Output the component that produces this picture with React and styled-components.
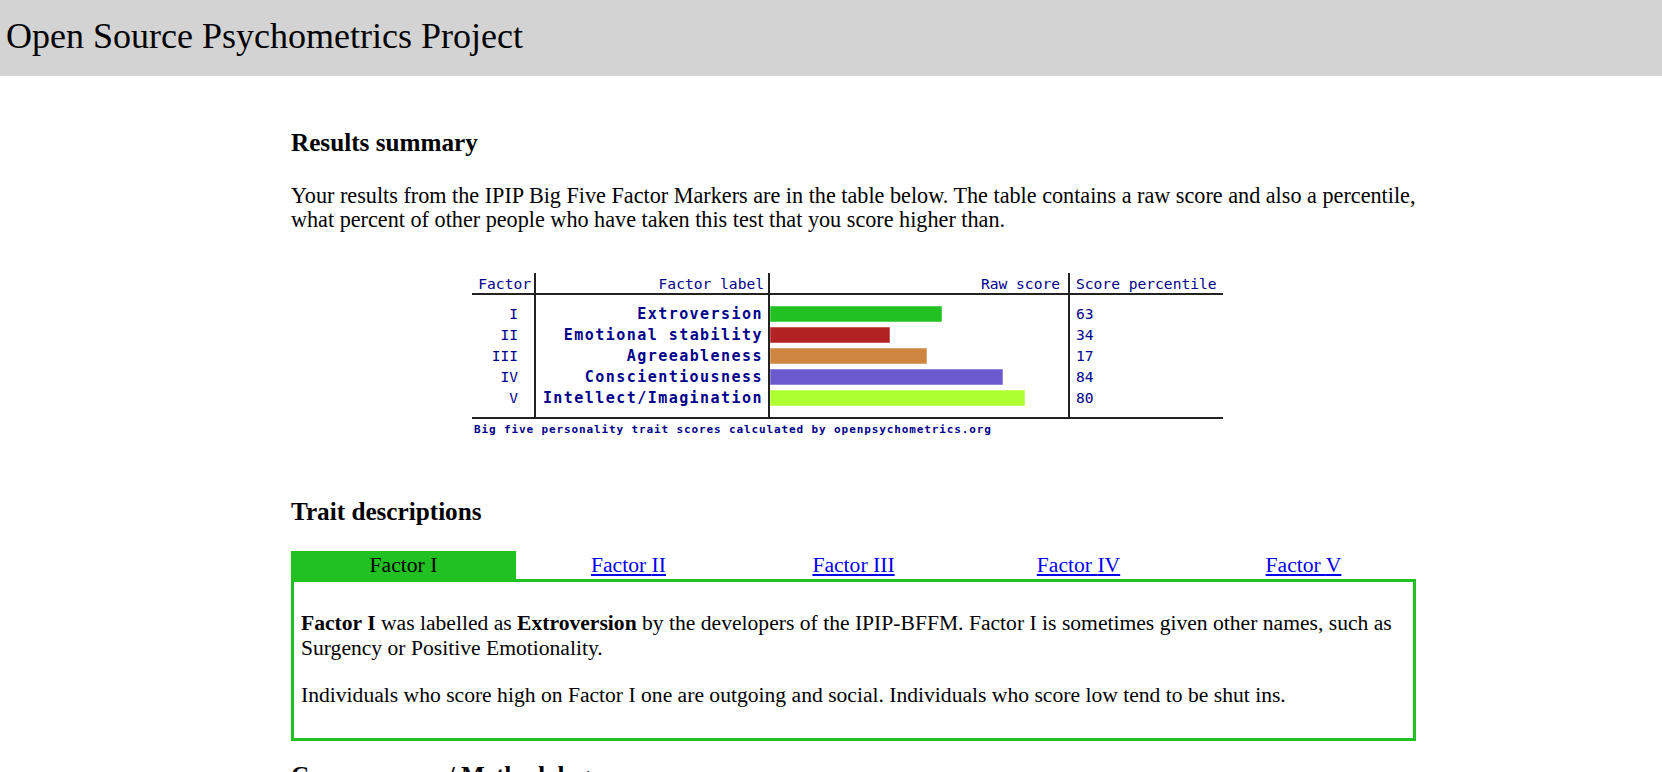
import React, { useState } from "react";
import styled, { createGlobalStyle } from "styled-components";

const traits = [
  { num: "I", label: "Extroversion", color: "#21c121", bar: 171, pct: 63 },
  { num: "II", label: "Emotional stability", color: "#b22222", bar: 119, pct: 34 },
  { num: "III", label: "Agreeableness", color: "#cd853f", bar: 156, pct: 17 },
  { num: "IV", label: "Conscientiousness", color: "#6a5acd", bar: 232, pct: 84 },
  { num: "V", label: "Intellect/Imagination", color: "#adff2f", bar: 254, pct: 80 },
];

const descriptions = [
  {
    intro: "Extroversion",
    other: "Surgency or Positive Emotionality",
    text: "Individuals who score high on Factor I one are outgoing and social. Individuals who score low tend to be shut ins.",
  },
  {
    intro: "Emotional Stability",
    other: "Neuroticism (reversed)",
    text: "Individuals who score high on Factor II are calm and even tempered. Individuals who score low tend to worry and get upset easily.",
  },
  {
    intro: "Agreeableness",
    other: "Friendliness or Likability",
    text: "Individuals who score high on Factor III are kind and trusting. Individuals who score low tend to be critical and competitive.",
  },
  {
    intro: "Conscientiousness",
    other: "Dependability or Will to Achieve",
    text: "Individuals who score high on Factor IV are organized and careful. Individuals who score low tend to be spontaneous and careless.",
  },
  {
    intro: "Intellect/Imagination",
    other: "Openness to Experience or Culture",
    text: "Individuals who score high on Factor V are curious and creative. Individuals who score low tend to prefer the familiar.",
  },
];

const GlobalStyle = createGlobalStyle`
  body {
    margin: 0;
    background: #fff;
    color: #000;
    font-family: "Liberation Serif", "Times New Roman", serif;
    font-size: 21.6px;
  }
`;

const Header = styled.header`
  height: 76px;
  background: #d3d3d3;
  display: flex;
  align-items: center;
  padding: 0 6px 5px;
  box-sizing: border-box;
`;

const SiteTitle = styled.div`
  font-size: 36px;
`;

const Main = styled.main`
  width: 1125px;
  margin-left: 291px;
`;

const Heading = styled.h3`
  font-size: 25.2px;
  line-height: 29px;
  font-weight: bold;
  margin: ${(p) => p.$top}px 0 0;
`;

const Text = styled.p`
  font-size: 22.2px;
  line-height: 24.5px;
  margin: ${(p) => p.$top || 0}px 0 0;
`;

const Chart = styled.svg`
  display: block;
  margin: 35px 0 0 181px;
  font-family: "DejaVu Sans Mono", "Liberation Mono", monospace;
`;

const Tabs = styled.div`
  display: grid;
  grid-template-columns: repeat(5, 1fr);
  margin-top: 24.5px;
`;

const Tab = styled.a`
  display: block;
  height: 28px;
  line-height: 28px;
  text-align: center;
  cursor: pointer;
  background: ${(p) => (p.$active ? "#21c121" : "transparent")};
  color: ${(p) => (p.$active ? "#000" : "#0000ee")};
  text-decoration: ${(p) => (p.$active ? "none" : "underline")};
`;

const Panel = styled.div`
  border: 3px solid #21c121;
  padding: 8px 10px 8px 7px;

  p {
    margin: 21.5px 0 22px;
    line-height: 25px;
  }
`;

function ScoreChart() {
  const ink = "#00008b";
  const line = "#222";
  const rowY = (i) => 51 + i * 21;
  return (
    <Chart width="760" height="172" viewBox="0 0 760 172">
      <g stroke={line} strokeWidth="2">
        <line x1="0" y1="26" x2="751" y2="26" />
        <line x1="0" y1="150" x2="751" y2="150" />
        <line x1="63" y1="5" x2="63" y2="150" />
        <line x1="297" y1="5" x2="297" y2="150" />
        <line x1="597" y1="5" x2="597" y2="150" />
      </g>
      <g fill={ink} fontSize="14.6">
        <text x="59" y="21" textAnchor="end">Factor</text>
        <text x="292" y="21" textAnchor="end">Factor label</text>
        <text x="588" y="21" textAnchor="end">Raw score</text>
        <text x="604" y="21">Score percentile</text>
      </g>
      {traits.map((t, i) => (
        <g key={t.num}>
          <text x="46" y={rowY(i)} textAnchor="end" fill={ink} fontSize="14.6">
            {t.num}
          </text>
          <text
            x="291"
            y={rowY(i)}
            textAnchor="end"
            fill={ink}
            fontSize="15"
            fontWeight="bold"
            letterSpacing="1.45"
          >
            {t.label}
          </text>
          <rect
            x="298.5"
            y={38.5 + i * 21}
            width={t.bar}
            height="15"
            fill={t.color}
            stroke={t.color}
            strokeOpacity="0.5"
          />
          <text x="604" y={rowY(i)} fill={ink} fontSize="14.6">
            {t.pct}
          </text>
        </g>
      ))}
      <text x="2" y="165" fill={ink} fontSize="11" fontWeight="bold" letterSpacing="0.88">
        Big five personality trait scores calculated by openpsychometrics.org
      </text>
    </Chart>
  );
}

export default function App() {
  const [active, setActive] = useState(0);
  const d = descriptions[active];
  const num = traits[active].num;

  return (
    <>
      <GlobalStyle />
      <Header>
        <SiteTitle>Open Source Psychometrics Project</SiteTitle>
      </Header>
      <Main>
        <Heading $top={52}>Results summary</Heading>
        <Text $top={26.75}>
          Your results from the IPIP Big Five Factor Markers are in the table below. The table
          contains a raw score and also a percentile, what percent of other people who have
          taken this test that you score higher than.
        </Text>

        <ScoreChart />

        <Heading $top={57.5}>Trait descriptions</Heading>
        <Tabs>
          {traits.map((t, i) => (
            <Tab key={t.num} $active={i === active} onClick={() => setActive(i)}>
              Factor {t.num}
            </Tab>
          ))}
        </Tabs>
        <Panel>
          <p>
            <b>Factor {num}</b> was labelled as <b>{d.intro}</b> by the developers of the
            IPIP-BFFM. Factor {num} is sometimes given other names, such as {d.other}.
          </p>
          <p>{d.text}</p>
        </Panel>

        <Heading $top={20}>Common uses / Methodology</Heading>
      </Main>
    </>
  );
}
